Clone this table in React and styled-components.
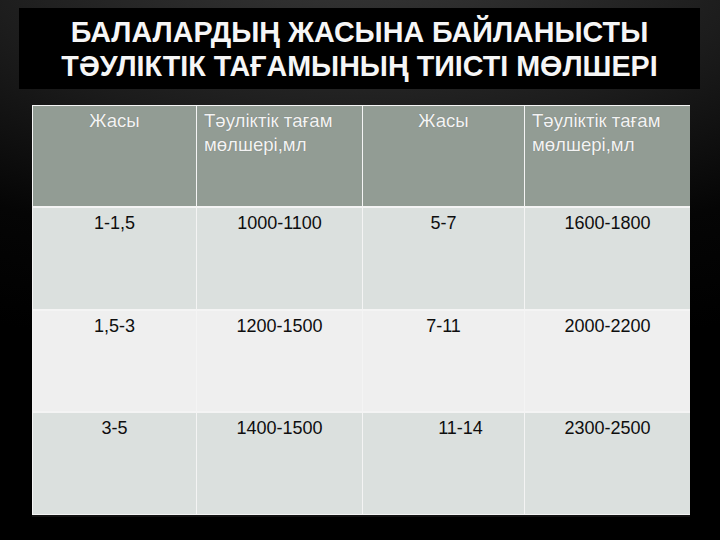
import React from "react";
import styled, { createGlobalStyle } from "styled-components";

const Global = createGlobalStyle`
  html, body { margin: 0; padding: 0; background: #000; }
  body { font-family: "Liberation Sans", Arial, sans-serif; }
`;

const Page = styled.div`
  width: 720px;
  height: 540px;
  box-sizing: border-box;
  padding-top: 8px;
  background:
    radial-gradient(ellipse 900px 420px at 50% -60px, #3a3a3a 0%, #1c1c1c 45%, #050505 75%, #000 100%);
  overflow: hidden;
`;

const TitleBar = styled.div`
  margin: 0 20px 0 19px;
  height: 81px;
  background: #000;
  display: flex;
  flex-direction: column;
  align-items: center;
  justify-content: center;
  color: #f6f6f6;
  font-family: "Liberation Sans", Arial, sans-serif;
  font-weight: bold;
  font-size: 28.7px;
  line-height: 34px;
  padding-top: 1px;
  box-sizing: border-box;
`;

const Table = styled.div`
  margin: 16px 0 0 32px;
  width: 658px;
  box-sizing: border-box;
  display: grid;
  grid-template-columns: 163px 165px 161px 165px;
  grid-template-rows: 100px 101px 100px 101px;
  gap: 2px 1px;
  background: #f4f4f4;
  border: 1px solid #f4f4f4;
  box-shadow: 0 2px 0 #111;
`;

const HeadCell = styled.div`
  background: #929c94;
  color: #f3f3f3;
  font-size: 18.6px;
  line-height: 24px;
  padding: 3px 6px 0 ${(p) => (p.$left ? "7px" : "6px")};
  text-align: ${(p) => (p.$left ? "left" : "center")};
  text-shadow: 0 0 1px rgba(0, 0, 0, 0.25);
`;

const Cell = styled.div`
  background: ${(p) => (p.$alt ? "#efefef" : "#dbe0de")};
  color: #0e0e0e;
  font-size: 18px;
  line-height: 22px;
  padding: 4px 0 0 ${(p) => p.$shift || 0}px;
  text-align: center;
`;

const rows = [
  ["1-1,5", "1000-1100", "5-7", "1600-1800"],
  ["1,5-3", "1200-1500", "7-11", "2000-2200"],
  ["3-5", "1400-1500", "11-14", "2300-2500"],
];

export default function App() {
  return (
    <>
      <Global />
      <Page>
        <TitleBar>
          <div>БАЛАЛАРДЫҢ ЖАСЫНА БАЙЛАНЫСТЫ</div>
          <div>ТӘУЛІКТІК ТАҒАМЫНЫҢ ТИІСТІ МӨЛШЕРІ</div>
        </TitleBar>
        <Table>
          <HeadCell>Жасы</HeadCell>
          <HeadCell $left>
            Тәуліктік тағам
            <br />
            мөлшері,мл
          </HeadCell>
          <HeadCell>Жасы</HeadCell>
          <HeadCell $left>
            Тәуліктік тағам
            <br />
            мөлшері,мл
          </HeadCell>
          {rows.map((r, i) =>
            r.map((v, j) => (
              <Cell key={`${i}-${j}`} $alt={i === 1} $shift={i === 2 && j === 2 ? 34 : 0}>
                {v}
              </Cell>
            ))
          )}
        </Table>
      </Page>
    </>
  );
}
